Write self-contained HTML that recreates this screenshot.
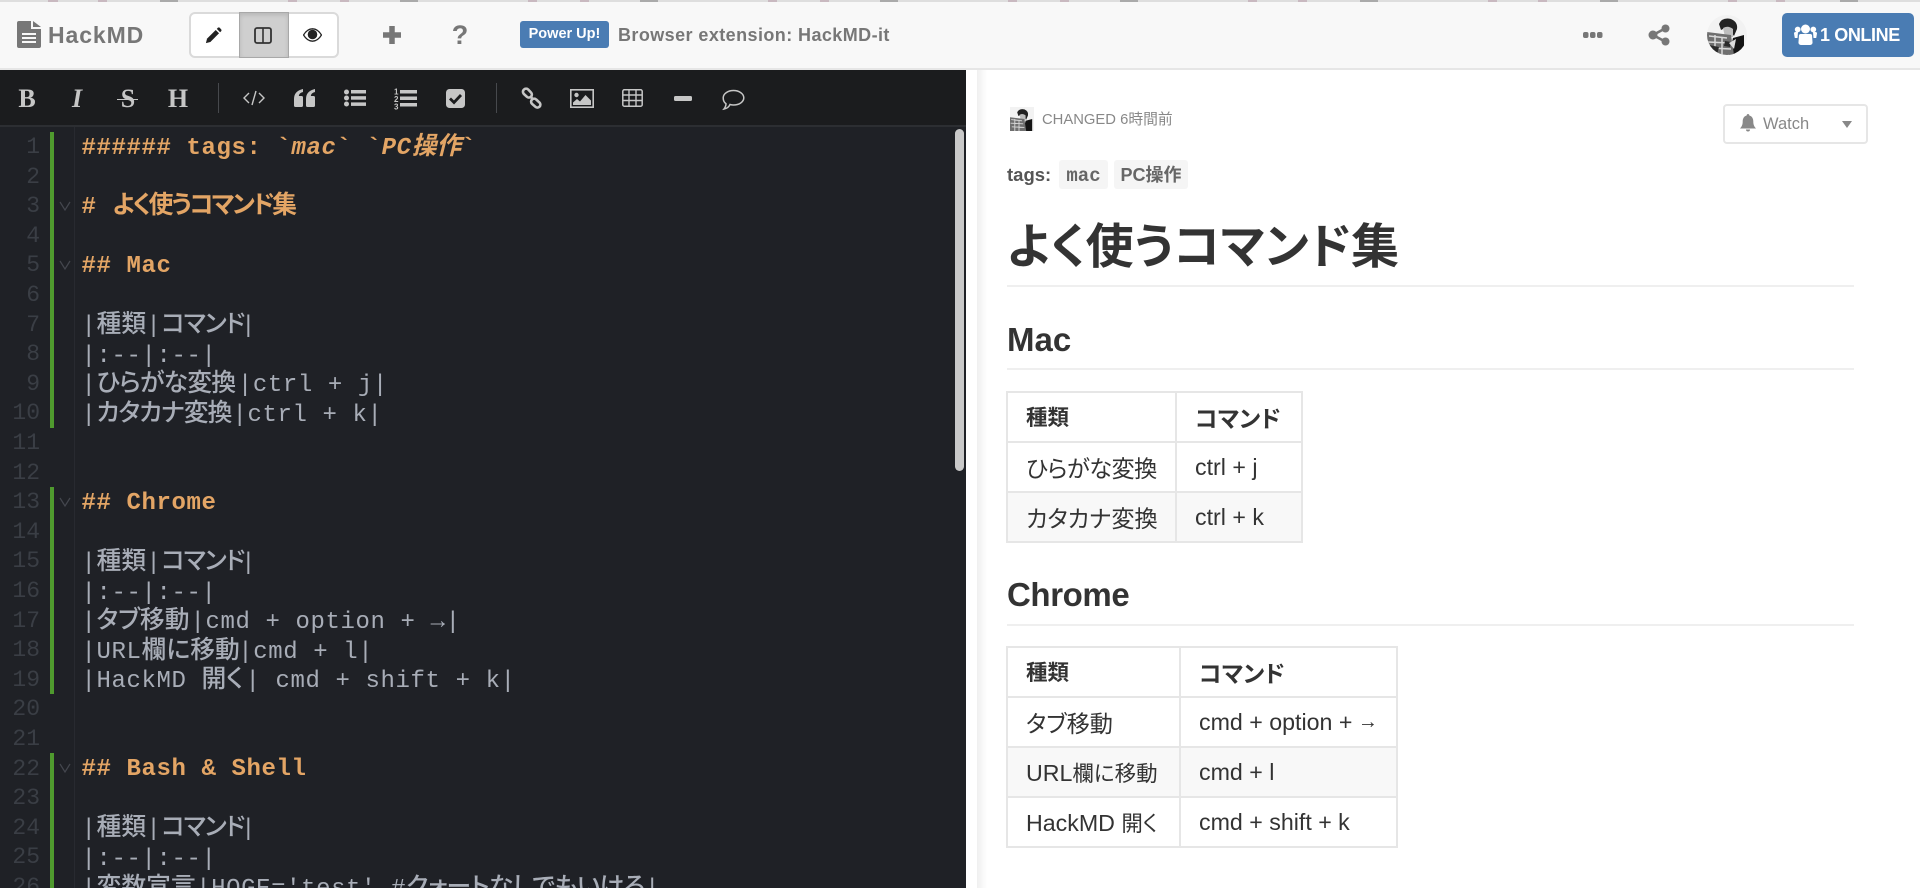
<!DOCTYPE html>
<html lang="ja"><head><meta charset="utf-8"><title>HackMD</title>
<style>
*{box-sizing:border-box}
html,body{margin:0;padding:0;width:1920px;height:888px;overflow:hidden;background:#fff;font-family:"Liberation Sans","Noto Sans CJK JP",sans-serif}
#page{position:relative;width:1920px;height:888px;overflow:hidden}
.a{position:absolute;white-space:nowrap}
#top{left:0;top:0;width:1920px;height:2px;background:#dedede}
#nav{left:0;top:2px;width:1920px;height:68px;background:#f8f8f8;border-bottom:2px solid #e6e6e6}
#tb{left:0;top:70px;width:966px;height:55px;background:#1b1c1e}
#tbl{left:0;top:125px;width:966px;height:2px;background:#2c2e32}
#ed{left:0;top:127px;width:966px;height:761px;background:#1f2126}
.n{left:0;width:40px;text-align:right;height:30px;line-height:30px;font:23px/30px "Liberation Mono",monospace;color:#3a3e45}
.l{left:81.5px;height:30px;margin-top:2.5px;font-family:"Liberation Mono","Noto Sans CJK JP",monospace;font-size:24px;line-height:30px;letter-spacing:.6px;color:#a8adb7}
.h{color:#e3a565;font-weight:700;margin-top:1.5px}
.j{display:inline-block;line-height:0;font-family:"Noto Sans CJK JP",sans-serif;font-size:24.8px;letter-spacing:0;font-feature-settings:"palt";font-weight:500;white-space:nowrap;vertical-align:baseline}
.g{left:50px;width:4px;background:#4f9a2e}
.s{font-family:"Liberation Serif",serif;font-weight:700;font-size:26px;line-height:32px;text-align:center;color:#c6c6c6;width:24px;top:83px}
table{border-collapse:collapse;font-size:23.2px;color:#333;table-layout:fixed}
td,th{border:2px solid #e6e6e6;padding:0 0 0 18px;text-align:left;white-space:nowrap;font-feature-settings:"palt"}
th{font-weight:700}
.alt td{background:#f8f8f8}
.rule{left:1007px;width:847px;height:2px;background:#efefef}
.gh{font-weight:700;color:#333}
.k{font-size:21.500px;position:relative;top:-1px}
</style></head><body><div id="page">
<div class="a" id="top"></div>
<svg class="a" style="left:0;top:0" width="1920" height="2"><g fill="#c9b9c0"><rect x="48" width="10" height="2"/><rect x="98" width="9" height="2"/><rect x="288" width="9" height="2"/><rect x="340" width="9" height="2"/><rect x="528" width="9" height="2"/><rect x="580" width="9" height="2"/><rect x="768" width="9" height="2"/><rect x="820" width="9" height="2"/><rect x="1008" width="9" height="2"/><rect x="1060" width="9" height="2"/><rect x="1248" width="9" height="2"/><rect x="1298" width="9" height="2"/><rect x="1488" width="9" height="2"/><rect x="1538" width="9" height="2"/><rect x="1728" width="9" height="2"/><rect x="1776" width="9" height="2"/></g><g fill="#aaa"><rect x="160" width="18" height="2"/><rect x="400" width="18" height="2"/><rect x="640" width="18" height="2"/><rect x="880" width="18" height="2"/><rect x="1120" width="18" height="2"/><rect x="1360" width="18" height="2"/><rect x="1600" width="18" height="2"/><rect x="1840" width="18" height="2"/></g></svg>
<div class="a" id="nav"></div>

<!-- logo -->
<svg class="a" style="left:17px;top:21px" width="24" height="27" viewBox="0 0 24 27"><path d="M2 0H14V8H24V25a2 2 0 0 1-2 2H2a2 2 0 0 1-2-2V2a2 2 0 0 1 2-2Z" fill="#777"/><path d="M16 0L24 6H16Z" fill="#777"/><path d="M5 13H19M5 17H19M5 21H19" stroke="#f8f8f8" stroke-width="2"/></svg>
<div class="a" style="left:48px;top:20px;height:30px;font:700 23px/30px 'Liberation Sans';letter-spacing:.9px;color:#777">HackMD</div>

<!-- view buttons -->
<div class="a" style="left:189px;top:12px;width:150px;height:46px;background:#fff;border:2px solid #dadada;border-radius:6px"></div>
<div class="a" style="left:239px;top:12px;width:50px;height:46px;background:#cfcfcf;border:1px solid #a8a8a8;box-shadow:inset 0 2px 4px rgba(0,0,0,.12)"></div>
<svg class="a" style="left:205px;top:27px" width="17" height="17" viewBox="0 0 19 19"><path d="M1 18l1.300-5L12 3.300l3.700 3.700L6 16.700Z" fill="#222"/><path d="M13.200 2.100l1.200-1.200a1.500 1.500 0 0 1 2 0l1.700 1.700a1.500 1.500 0 0 1 0 2l-1.200 1.200Z" fill="#222"/></svg>
<svg class="a" style="left:254px;top:27px" width="18" height="17" viewBox="0 0 18 17"><rect x="1" y="1" width="16" height="15" rx="2" fill="none" stroke="#333" stroke-width="1.800"/><path d="M9 1V16" stroke="#333" stroke-width="1.600"/></svg>
<svg class="a" style="left:303px;top:28px" width="19" height="14" viewBox="0 0 19 14"><path d="M.5 7C3 2.800 6 .8 9.500 .8S16 2.800 18.500 7C16 11.200 13 13.200 9.500 13.200S3 11.200 .5 7Z" fill="none" stroke="#222" stroke-width="1.300"/><circle cx="9.500" cy="6.500" r="4.800" fill="#222"/></svg>

<!-- plus, help -->
<svg class="a" style="left:382px;top:25px" width="20" height="20"><path d="M10 1V19M1 10H19" stroke="#777" stroke-width="5.500"/></svg>
<div class="a" style="left:450px;top:20px;width:20px;height:30px;text-align:center;font:700 27px/30px 'Liberation Sans';color:#777">?</div>

<!-- power up -->
<div class="a" style="left:520px;top:21px;width:89px;height:27px;background:#4a7cb3;border-radius:3px;text-align:center;font:700 14.500px/26px 'Liberation Sans';color:#fff">Power Up!</div>
<div class="a" style="left:618px;top:20px;height:30px;font:700 18px/30px 'Liberation Sans';letter-spacing:.42px;color:#777">Browser extension: HackMD-it</div>

<!-- right nav -->
<svg class="a" style="left:1582px;top:30px" width="21" height="10"><g fill="#777"><rect x="1" y="2" width="5.500" height="6" rx="2"/><rect x="8" y="2" width="5.500" height="6" rx="2"/><rect x="15" y="2" width="5.500" height="6" rx="2"/></g></svg>
<svg class="a" style="left:1648px;top:24px" width="22" height="22" viewBox="0 0 22 22"><path d="M17 4.500L5 11L17 17.500" fill="none" stroke="#777" stroke-width="2.600"/><circle cx="17.500" cy="4.500" r="4" fill="#777"/><circle cx="5" cy="11" r="4.500" fill="#777"/><circle cx="17.500" cy="17.500" r="4" fill="#777"/></svg>
<svg class="a" style="left:1707px;top:15px" width="40" height="40" viewBox="0 0 40 40"><defs><clipPath id="c"><circle cx="20" cy="20" r="20"/></clipPath></defs><g clip-path="url(#c)"><rect width="40" height="40" fill="#f2f2f2"/><path d="M12 9Q15 2 24 4Q31 7 30 14L27 21L20 12L14 15Z" fill="#222"/><path d="M16 13Q21 10 26 14L26 22L18 22Z" fill="#bdbdbd"/><path d="M26 23L37 20V40H22Z" fill="#151515"/><path d="M0 17L24 20L27 40H0Z" fill="#6f6f6f"/><path d="M2 21L20 23M1 27L22 28M3 33L24 34M8 20V40M15 22V40" stroke="#d8d8d8" stroke-width="1.500"/><path d="M2 30L12 32L10 40H0Z" fill="#2a2a2a"/><path d="M18 26L24 27L23 32L17 31Z" fill="#2a2a2a"/><path d="M22 28L29 24L27 34Z" fill="#ddd"/></g></svg>
<div class="a" style="left:1782px;top:13px;width:132px;height:44px;background:#4a7cb3;border-radius:5px"></div>
<svg class="a" style="left:1794px;top:24px" width="23" height="21" viewBox="0 0 23 21" fill="#fff"><circle cx="11.500" cy="5" r="4.500"/><circle cx="3.700" cy="5.500" r="2.900"/><circle cx="19.300" cy="5.500" r="2.900"/><path d="M5 11a2 2 0 0 1 2-1H16a2 2 0 0 1 2 1L18.500 18a2.500 2.500 0 0 1-2.500 3H7a2.500 2.500 0 0 1-2.500-3Z"/><path d="M0 9.500a1.500 1.500 0 0 1 1.500-1.500H4L3.500 14H.8Z"/><path d="M23 9.500a1.500 1.500 0 0 0-1.500-1.500H19L19.500 14H22.200Z"/></svg>
<div class="a" style="left:1820px;top:20px;height:30px;font:700 18px/30px 'Liberation Sans';letter-spacing:-.4px;color:#fff">1 ONLINE</div>

<!-- toolbar -->
<div class="a" id="tb"></div><div class="a" id="tbl"></div>
<div class="a s" style="left:15px">B</div>
<div class="a s" style="left:65px;font-style:italic">I</div>
<div class="a s" style="left:116px">S</div>
<div class="a" style="left:117px;top:98.500px;width:21px;height:1.500px;background:#c6c6c6"></div>
<div class="a s" style="left:166px">H</div>
<div class="a" style="left:218px;top:83px;width:1px;height:30px;background:#47494d"></div>
<div class="a" style="left:496px;top:83px;width:1px;height:30px;background:#47494d"></div>
<svg class="a" style="left:243px;top:87px" width="22" height="22" viewBox="0 0 22 22" fill="none" stroke="#c6c6c6" stroke-width="1.400"><path d="M6 6L1 11L6 16M16 6L21 11L16 16M13 4L9 18"/></svg>
<svg class="a" style="left:294px;top:89px" width="21" height="18" viewBox="0 0 21 18" fill="#c6c6c6"><path d="M0 10Q0 2 9 0V3Q5 4 4.800 7H7.500A1.500 1.500 0 0 1 9 8.500V16.500A1.500 1.500 0 0 1 7.500 18H1.500A1.500 1.500 0 0 1 0 16.500Z"/><path d="M12 10Q12 2 21 0V3Q17 4 16.800 7H19.500A1.500 1.500 0 0 1 21 8.500V16.500A1.500 1.500 0 0 1 19.500 18H13.500A1.500 1.500 0 0 1 12 16.500Z"/></svg>
<svg class="a" style="left:344px;top:89px" width="22" height="18" viewBox="0 0 22 18" fill="#c6c6c6"><circle cx="2.500" cy="3" r="2.500"/><circle cx="2.500" cy="9" r="2.500"/><circle cx="2.500" cy="15" r="2.500"/><rect x="7" y="1" width="15" height="3.500"/><rect x="7" y="7.200" width="15" height="3.500"/><rect x="7" y="13.400" width="15" height="3.500"/></svg>
<svg class="a" style="left:394px;top:87px" width="23" height="23" viewBox="0 0 23 23" fill="#c6c6c6"><rect x="6" y="3" width="17" height="3.500"/><rect x="6" y="9.500" width="17" height="3.500"/><rect x="6" y="16" width="17" height="3.500"/><text x="0" y="7.500" font-size="8" font-weight="700" font-family="Liberation Sans">1</text><text x="0" y="15" font-size="8" font-weight="700" font-family="Liberation Sans">2</text><text x="0" y="22.500" font-size="8" font-weight="700" font-family="Liberation Sans">3</text></svg>
<svg class="a" style="left:446px;top:89px" width="19" height="19" viewBox="0 0 19 19"><rect width="19" height="19" rx="3.500" fill="#c6c6c6"/><path d="M4 9.500L8 13.500L15 6" fill="none" stroke="#1b1c1e" stroke-width="2.800"/></svg>
<svg class="a" style="left:521px;top:87px" width="21" height="22" viewBox="0 0 21 22" fill="none" stroke="#c6c6c6" stroke-width="2.600"><path d="M3 2.500a3 3 0 0 1 4.200 0L10 5.500a3 3 0 0 1 0 4.200a3 3 0 0 1-4.200 0L2.700 6.800a3 3 0 0 1 .3-4.300Z"/><path d="M11 12.500a3 3 0 0 1 4.200 0L18.500 15.500a3 3 0 0 1 0 4.200a3 3 0 0 1-4.200 0L11 16.800a3 3 0 0 1 0-4.300Z"/><path d="M9 9L12.500 13"/></svg>
<svg class="a" style="left:570px;top:89px" width="24" height="19" viewBox="0 0 24 19"><rect x=".8" y=".8" width="22.400" height="17.400" fill="none" stroke="#c6c6c6" stroke-width="1.600"/><circle cx="6.500" cy="6" r="2.200" fill="#c6c6c6"/><path d="M3 16V13.500L7 10L10 12.500L15.500 6L21 11.500V16Z" fill="#c6c6c6"/></svg>
<svg class="a" style="left:622px;top:89px" width="21" height="18" viewBox="0 0 21 18"><rect x=".8" y=".8" width="19.400" height="16.400" rx="1.500" fill="none" stroke="#c6c6c6" stroke-width="1.500"/><path d="M1 6H20M1 11.500H20M7 1V17M14 1V17" stroke="#c6c6c6" stroke-width="1.400"/></svg>
<div class="a" style="left:674px;top:96px;width:18px;height:5px;border-radius:1.500px;background:#c6c6c6"></div>
<svg class="a" style="left:722px;top:89px" width="23" height="22" viewBox="0 0 23 22"><path d="M11.500 1.500C17 1.500 21.800 4.600 21.800 8.800S17 16 11.500 16C10 16 9 15.800 8 15.500C7 18 4.500 19.500 2 20C3.200 18.500 4 17 4 14.800C2 13.500 1.200 11 1.200 8.800C1.200 4.600 6 1.500 11.500 1.500Z" fill="none" stroke="#c6c6c6" stroke-width="1.500"/></svg>

<!-- editor -->
<div class="a" id="ed"></div>
<div class="a" style="left:74px;top:127px;width:1px;height:761px;background:#282a30"></div>
<div class="a g" style="top:132px;height:296px"></div>
<div class="a g" style="top:487px;height:207px"></div>
<div class="a g" style="top:753px;height:135px"></div>
<div class="a n" style="top:132px">1</div><div class="a n" style="top:161.600px">2</div><div class="a n" style="top:191.200px">3</div><div class="a n" style="top:220.800px">4</div><div class="a n" style="top:250.400px">5</div><div class="a n" style="top:280px">6</div><div class="a n" style="top:309.600px">7</div><div class="a n" style="top:339.200px">8</div><div class="a n" style="top:368.800px">9</div><div class="a n" style="top:398.400px">10</div><div class="a n" style="top:428px">11</div><div class="a n" style="top:457.600px">12</div><div class="a n" style="top:487.200px">13</div><div class="a n" style="top:516.800px">14</div><div class="a n" style="top:546.400px">15</div><div class="a n" style="top:576px">16</div><div class="a n" style="top:605.600px">17</div><div class="a n" style="top:635.200px">18</div><div class="a n" style="top:664.800px">19</div><div class="a n" style="top:694.400px">20</div><div class="a n" style="top:724px">21</div><div class="a n" style="top:753.600px">22</div><div class="a n" style="top:783.200px">23</div><div class="a n" style="top:812.800px">24</div><div class="a n" style="top:842.400px">25</div><div class="a n" style="top:872px">26</div>
<svg class="a" style="left:59px;top:127px" width="13" height="761" fill="none" stroke="#44474e" stroke-width="1.200"><path d="M1 75L6 83L11 75M1 134L6 142L11 134M1 371L6 379L11 371M1 637L6 645L11 637"/></svg>

<div class="a l h" style="top:132px">###### tags: `<i>mac</i>` `<i>PC</i><span class="j" style="font-style:italic;font-weight:700">操作</span>`</div>
<div class="a l h" style="top:191.200px"># <span class="j" style="font-weight:700;letter-spacing:-2.250px;margin-left:1px">よく使うコマンド集</span></div>
<div class="a l h" style="top:250.400px">## Mac</div>
<div class="a l" style="top:309.600px">|<span class="j" style="width:49.800px">種類</span>|<span class="j" style="width:79.800px;letter-spacing:-1.200px">コマンド</span>|</div>
<div class="a l" style="top:339.200px">|:--|:--|</div>
<div class="a l" style="top:368.800px">|<span class="j" style="width:141.400px;letter-spacing:-.7px">ひらがな変換</span>|ctrl + j|</div>
<div class="a l" style="top:398.400px">|<span class="j" style="width:136px;letter-spacing:-1px">カタカナ変換</span>|ctrl + k|</div>
<div class="a l h" style="top:487.200px">## Chrome</div>
<div class="a l" style="top:546.400px">|<span class="j" style="width:49.800px">種類</span>|<span class="j" style="width:79.800px;letter-spacing:-1.200px">コマンド</span>|</div>
<div class="a l" style="top:576px">|:--|:--|</div>
<div class="a l" style="top:605.600px">|<span class="j" style="width:94px">タブ移動</span>|cmd + option + <b>→</b>|</div>
<div class="a l" style="top:635.200px">|URL<span class="j" style="width:96.700px">欄に移動</span>|cmd + l|</div>
<div class="a l" style="top:664.800px">|HackMD <span class="j" style="width:44px">開く</span>| cmd + shift + k|</div>
<div class="a l h" style="top:753.600px">## Bash &amp; Shell</div>
<div class="a l" style="top:812.800px">|<span class="j" style="width:49.800px">種類</span>|<span class="j" style="width:79.800px;letter-spacing:-1.200px">コマンド</span>|</div>
<div class="a l" style="top:842.400px">|:--|:--|</div>
<div class="a l" style="top:872px">|<span class="j" style="width:99.600px">変数宣言</span>|HOGE='test' #<span class="j" style="letter-spacing:-.6px">クォートなしでもいける</span>|</div>
<div class="a" style="left:955px;top:129px;width:9px;height:342px;border-radius:5px;background:#c9c9c9"></div>

<!-- divider -->
<div class="a" style="left:977px;top:70px;width:10px;height:818px;background:linear-gradient(90deg,#efefef,#fff)"></div>

<!-- preview -->
<svg class="a" style="left:1010px;top:107px" width="24" height="24" viewBox="0 0 40 40"><rect width="40" height="40" fill="#f2f2f2"/><path d="M12 9Q15 2 24 4Q31 7 30 14L27 21L20 12L14 15Z" fill="#222"/><path d="M16 13Q21 10 26 14L26 22L18 22Z" fill="#bdbdbd"/><path d="M26 23L37 20V40H22Z" fill="#151515"/><path d="M0 17L24 20L27 40H0Z" fill="#6f6f6f"/><path d="M2 21L20 23M1 27L22 28M3 33L24 34M8 20V40M15 22V40" stroke="#d8d8d8" stroke-width="1.500"/></svg>
<div class="a" style="left:1042px;top:107.500px;height:24px;font:400 14.800px/24px 'Liberation Sans','Noto Sans CJK JP',sans-serif;color:#888">CHANGED 6時間前</div>
<div class="a" style="left:1723px;top:104px;width:145px;height:40px;border:2px solid #e6e6e6;border-radius:4px;background:#fff"></div>
<svg class="a" style="left:1740px;top:114px" width="16" height="18" viewBox="0 0 16 18" fill="#888"><path d="M8 0a1.300 1.300 0 0 1 1.300 1.500C12 2.200 13.300 4.500 13.300 7.500C13.300 11 14.300 12.500 16 14.500H0C1.700 12.500 2.700 11 2.700 7.500C2.700 4.500 4 2.200 6.700 1.500A1.300 1.300 0 0 1 8 0Z"/><path d="M6 15.500a2 2 0 0 0 4 0Z"/></svg>
<div class="a" style="left:1763px;top:109px;height:30px;font:400 16.500px/30px 'Liberation Sans';color:#888">Watch</div>
<svg class="a" style="left:1842px;top:121px" width="10" height="7"><path d="M0 0H10L5 7Z" fill="#888"/></svg>

<div class="a" style="left:1007px;top:160px;height:30px;font:700 18.500px/30px 'Liberation Sans';color:#555">tags:</div>
<div class="a" style="left:1059px;top:160px;width:49px;height:29px;background:#f5f5f5;border-radius:3px;text-align:center;font:700 19px/32px 'Liberation Mono';color:#666">mac</div>
<div class="a" style="left:1114px;top:160px;width:74px;height:29px;background:#f5f5f5;border-radius:3px;text-align:center;font:700 18px/31px 'Liberation Sans','Noto Sans CJK JP',sans-serif;color:#666">PC操作</div>

<div class="a gh" style="left:1007px;top:218px;height:60px;font-size:48px;line-height:60px;font-feature-settings:'palt'">よく使うコマンド集</div>
<div class="a rule" style="top:285px"></div>
<div class="a gh" style="left:1007px;top:320px;height:40px;font-size:33px;line-height:40px">Mac</div>
<div class="a rule" style="top:368px"></div>
<table class="a" style="left:1006px;top:391px;width:295px;height:150px"><colgroup><col style="width:169px"><col style="width:126px"></colgroup>
<tr style="height:50px"><th><span class="k">種類</span></th><th>コマンド</th></tr>
<tr style="height:50px"><td><span style="letter-spacing:-.5px">ひらがな変換</span></td><td>ctrl + j</td></tr>
<tr class="alt" style="height:50px"><td>カタカナ変換</td><td>ctrl + k</td></tr></table>
<div class="a gh" style="left:1007px;top:575px;height:40px;font-size:33px;line-height:40px;letter-spacing:-.4px">Chrome</div>
<div class="a rule" style="top:624px"></div>
<table class="a" style="left:1006px;top:646px;width:390px;height:200px"><colgroup><col style="width:173px"><col style="width:217px"></colgroup>
<tr style="height:50px"><th><span class="k">種類</span></th><th>コマンド</th></tr>
<tr style="height:50px"><td>タブ移動</td><td>cmd + option + <span style="font-size:20px;position:relative;top:-2px;margin-left:-1px">→</span></td></tr>
<tr class="alt" style="height:50px"><td>URL<span style="font-size:21.500px">欄に移動</span></td><td>cmd + l</td></tr>
<tr style="height:50px"><td>HackMD <span style="font-size:21.500px">開く</span></td><td>cmd + shift + k</td></tr></table>
</div></body></html>
